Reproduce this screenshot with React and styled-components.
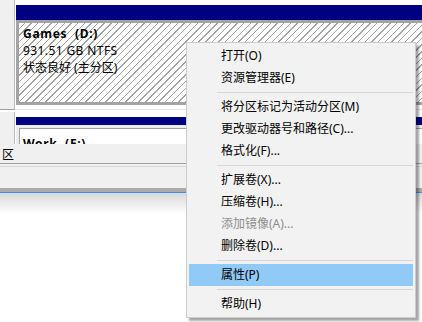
import React from 'react';
import styled, { createGlobalStyle } from 'styled-components';

const GlobalStyle = createGlobalStyle`
    html, body {
        margin: 0;
        padding: 0;
        background: #fff;
    }
    body {
        font-family: "Noto Sans", "Noto Sans CJK SC", sans-serif;
        font-size: 12px;
    }
`;

const Page = styled.div`
    width: 422px;
    height: 322px;
    position: relative;
    overflow: hidden;
    display: flex;
    flex-direction: column;
    background: #fff;
`;

const DiskArea = styled.div`
    height: 144px;
    overflow: hidden;
    display: flex;
    flex-direction: column;
    gap: 2px;
    background: #fff;
    flex-shrink: 0;
`;

const DiskRow = styled.div`
    display: flex;
    height: ${p => p.h}px;
    flex-shrink: 0;
`;

const LabelCell = styled.div`
    width: 14px;
    background: #f0f0f0;
    border-right: 1px solid #b9b9b9;
    border-bottom: 1px solid #a0a0a0;
`;

const VolumeCell = styled.div`
    flex: 1;
    padding: 5px 0 0 1px;
    border-bottom: 1px solid #e6e6e6;
    display: flex;
    flex-direction: column;
`;

const VolumeHeader = styled.div`
    height: 15px;
    background: #000080;
`;

const VolumeBody = styled.div`
    height: ${p => p.h}px;
    padding: ${p => (p.selected ? '2px' : '7px')} 0 0 4px;
    line-height: 17px;
    color: #000;
    border: 3px solid ${p => (p.selected ? '#a3a3a3' : '#ececec')};
    border-right: none;
    box-shadow: ${p => (p.selected ? 'none' : 'inset 1px 1px 0 #a0a0a0')};
    background: ${p => p.selected
        ? 'repeating-linear-gradient(135deg, #fff 0, #fff 3.7px, #a2a2a2 3.7px, #a2a2a2 4.7px)'
        : '#fff'};
`;

const VolumeName = styled.div`
    font-weight: bold;
    letter-spacing: 0.7px;
    white-space: pre;
`;

const VolumeLine = styled.div`
    letter-spacing: ${p => (p.latin ? '0.4px' : '0')};
    white-space: pre;
`;

const BottomPanel = styled.div`
    background: #f0f0f0;
    flex-shrink: 0;
`;

const LegendBar = styled.div`
    height: 19px;
    padding-left: 2px;
    display: flex;
    align-items: center;
    border-bottom: 1px solid #a0a0a0;
`;

const LegendText = styled.span`
    white-space: nowrap;
    color: #000;
`;

const StatusBar = styled.div`
    margin-top: 2px;
    height: 21px;
    border-top: 1px solid #d7d7d7;
`;

const WindowEdge = styled.div`
    height: 1px;
    border-top: 4px solid #ababab;
    background: #3a8fe6;
    flex-shrink: 0;
`;

const Desktop = styled.div`
    flex: 1;
    background: linear-gradient(#d9d9d9 0, #fff 21px);
`;

const Menu = styled.div`
    position: absolute;
    left: 186px;
    top: 42px;
    width: 230px;
    box-sizing: border-box;
    padding: 2px;
    background: #f2f2f2;
    border: 1px solid #cccccc;
    box-shadow: 3px 3px 2px rgba(0, 0, 0, 0.35);
    font-family: "Noto Sans", "Noto Sans CJK SC", sans-serif;
    font-size: 12px;
`;

const Item = styled.div`
    height: 22px;
    line-height: 22px;
    padding-left: 32px;
    white-space: nowrap;
    color: ${p => (p.disabled ? '#8d8d8d' : '#000')};
    background: ${p => (p.active ? '#91c9f7' : 'transparent')};
`;

const Separator = styled.div`
    height: 1px;
    margin: 3px 0 3px 28px;
    background: #d7d7d7;
`;

const menu = [
    { label: '打开(O)' },
    { label: '资源管理器(E)' },
    'sep',
    { label: '将分区标记为活动分区(M)' },
    { label: '更改驱动器号和路径(C)...' },
    { label: '格式化(F)...' },
    'sep',
    { label: '扩展卷(X)...' },
    { label: '压缩卷(H)...' },
    { label: '添加镜像(A)...', disabled: true },
    { label: '删除卷(D)...' },
    'sep',
    { label: '属性(P)', active: true },
    'sep',
    { label: '帮助(H)' },
];

export default function App() {
    return (
        <Page>
            <GlobalStyle />
            <DiskArea>
                <DiskRow h={110}>
                    <LabelCell />
                    <VolumeCell>
                        <VolumeHeader />
                        <VolumeBody selected h={77}>
                            <VolumeName>{'Games  (D:)'}</VolumeName>
                            <VolumeLine latin>931.51 GB NTFS</VolumeLine>
                            <VolumeLine>状态良好 (主分区)</VolumeLine>
                        </VolumeBody>
                    </VolumeCell>
                </DiskRow>
                <DiskRow h={60}>
                    <LabelCell />
                    <VolumeCell>
                        <VolumeHeader />
                        <VolumeBody h={60}>
                            <VolumeName>{'Work  (E:)'}</VolumeName>
                        </VolumeBody>
                    </VolumeCell>
                </DiskRow>
            </DiskArea>
            <BottomPanel>
                <LegendBar>
                    <LegendText>区</LegendText>
                </LegendBar>
                <StatusBar />
            </BottomPanel>
            <WindowEdge />
            <Desktop />
            <Menu>
                {menu.map((m, i) =>
                    m === 'sep'
                        ? <Separator key={i} />
                        : <Item key={i} disabled={m.disabled} active={m.active}>{m.label}</Item>
                )}
            </Menu>
        </Page>
    );
}
